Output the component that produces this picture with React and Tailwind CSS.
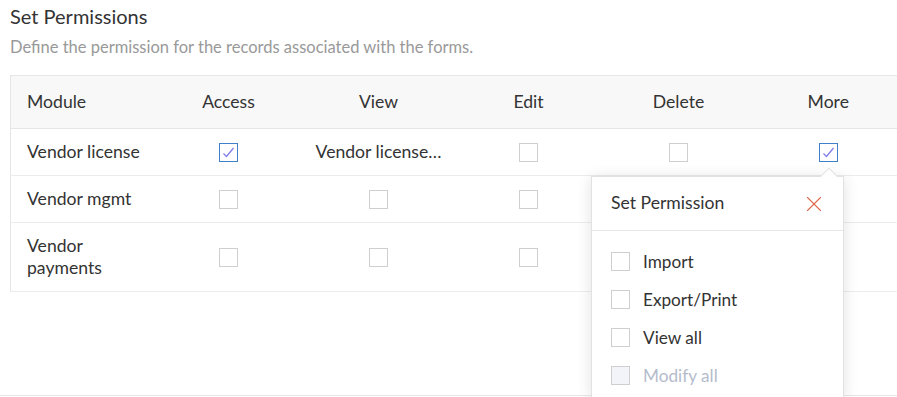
import { X } from 'lucide-react';

const rows = [
  { name: 'Vendor license', access: true, view: 'Vendor license…', edit: false, del: false, more: true },
  { name: 'Vendor mgmt', access: false, view: false, edit: false, del: false, more: false },
  { name: ['Vendor', 'payments'], access: false, view: false, edit: false, del: false, more: false },
];

const options = [
  { label: 'Import' },
  { label: 'Export/Print' },
  { label: 'View all' },
  { label: 'Modify all', disabled: true },
];

const Checkbox = ({ checked, disabled }) => (
  <span
    className={`flex shrink-0 items-center justify-center w-[19px] h-[19px] border ${
      checked ? 'border-[#3f80c8]' : 'border-[#cfcfcf]'
    } ${disabled ? 'bg-[#f3f4f9]' : 'bg-white'}`}
  >
    {checked && (
      <svg width="13" height="11" viewBox="0 0 13 11" fill="none">
        <path d="M1.5 6.5 L4.5 9.5 L11.5 1" stroke="#7f7ff0" strokeWidth="1.3" />
      </svg>
    )}
  </span>
);

const Cell = ({ value }) => (
  <td className="text-center align-middle">
    {typeof value === 'string' ? (
      <span>{value}</span>
    ) : (
      <div className="flex justify-center">
        <Checkbox checked={value} />
      </div>
    )}
  </td>
);

const App = () => {
  return (
    <div className="relative h-[397px] overflow-hidden bg-white text-[#333] font-['Lato',sans-serif]">
      <div className="h-[396px] border-b border-[#e6e6e6] pl-[10px]">
        <h1 className="text-[20px] leading-6 pt-[4px] font-normal">Set Permissions</h1>
        <p className="text-[16.5px] leading-5 text-[#999] mt-[9px]">
          Define the permission for the records associated with the forms.
        </p>

        <table className="mt-[18px] w-[893px] border-collapse table-fixed border border-[#e6e6e6] text-[17.6px]">
          <colgroup>
            <col className="w-[143px]" />
            <col className="w-[150px]" />
            <col className="w-[150px]" />
            <col className="w-[150px]" />
            <col className="w-[150px]" />
            <col className="w-[150px]" />
          </colgroup>
          <thead>
            <tr className="bg-[#f8f8f8] h-[53px] border-b border-[#e6e6e6]">
              <th className="text-left font-normal pl-[16px]">Module</th>
              <th className="font-normal">Access</th>
              <th className="font-normal">View</th>
              <th className="font-normal">Edit</th>
              <th className="font-normal">Delete</th>
              <th className="font-normal">More</th>
            </tr>
          </thead>
          <tbody>
            {rows.map((r, i) => (
              <tr
                key={i}
                className={`border-b border-[#ececec] ${i === 2 ? 'h-[69px]' : 'h-[47px]'}`}
              >
                <td className="pl-[16px] leading-[22px] align-middle">
                  {Array.isArray(r.name) ? r.name.map((n) => <div key={n}>{n}</div>) : r.name}
                </td>
                <Cell value={r.access} />
                <Cell value={r.view} />
                <Cell value={r.edit} />
                <Cell value={r.del} />
                <Cell value={r.more} />
              </tr>
            ))}
          </tbody>
        </table>
      </div>

      {/* permission popover */}
      <div className="absolute left-[591px] top-[176px] w-[253px] h-[222px] bg-white border border-[#e2e2e2] shadow-[0_2px_14px_rgba(0,0,0,0.12)]">
        <span className="absolute -top-[7px] left-[231px] w-[12px] h-[12px] rotate-45 bg-white border-l border-t border-[#e2e2e2]" />
        <div className="flex items-center justify-between h-[54px] pl-[19px] pr-[16px] border-b border-[#e6e6e6]">
          <span className="text-[17.6px]">Set Permission</span>
          <X size={26} strokeWidth={1} className="text-[#e0674b]" />
        </div>
        <div className="flex flex-col gap-[19px] pt-[21px] pl-[19px]">
          {options.map((o) => (
            <label key={o.label} className="flex items-center gap-[13px] h-[19px] text-[17.2px]">
              <Checkbox disabled={o.disabled} />
              <span className={o.disabled ? 'text-[#b4bccc]' : ''}>{o.label}</span>
            </label>
          ))}
        </div>
      </div>
    </div>
  );
};

export default App;
